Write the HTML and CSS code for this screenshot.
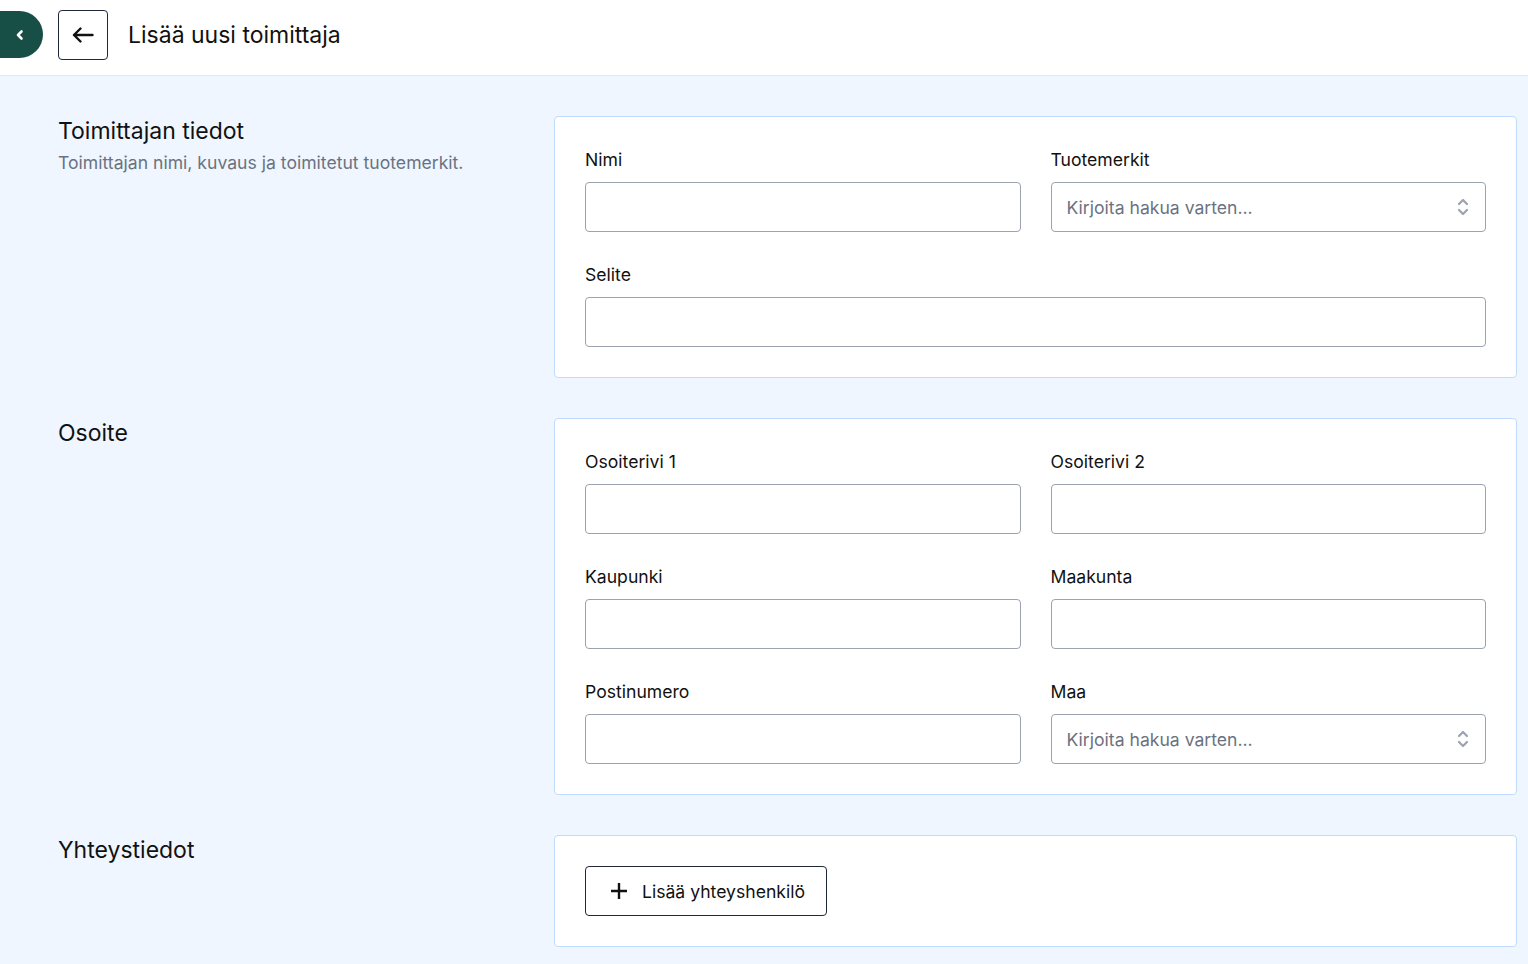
FILE: index.html
```html
<!DOCTYPE html>
<html lang="fi">
<head>
<meta charset="utf-8">
<title>Lisää uusi toimittaja</title>
<link rel="stylesheet" href="styles.css">
</head>
<body>
<header class="topbar">
  <button class="sidebar-toggle" aria-label="Sulje valikko">
    <svg width="10" height="12" viewBox="0 0 10 12"><path d="M6.5 2.5 3 6l3.5 3.5" fill="none" stroke="#fff" stroke-width="2.6" stroke-linecap="round" stroke-linejoin="round"/></svg>
  </button>
  <button class="back-btn" aria-label="Takaisin">
    <svg width="22" height="16" viewBox="0 0 22 16"><path d="M20.5 8H2M8.5 1.5 2 8l6.5 6.5" fill="none" stroke="#111" stroke-width="2.4" stroke-linecap="round" stroke-linejoin="round"/></svg>
  </button>
  <h1 class="page-title">Lisää uusi toimittaja</h1>
</header>
<main class="content">
  <section class="section">
    <div class="section-info">
      <h2 class="section-title">Toimittajan tiedot</h2>
      <p class="section-desc">Toimittajan nimi, kuvaus ja toimitetut tuotemerkit.</p>
    </div>
    <div class="card">
      <div class="grid">
        <div class="field">
          <label class="label">Nimi</label>
          <input class="input" type="text">
        </div>
        <div class="field">
          <label class="label">Tuotemerkit</label>
          <div class="select">
            <span class="placeholder">Kirjoita hakua varten...</span>
            <svg class="updown" width="14" height="22" viewBox="0 0 14 22"><path d="M3 8l4-4 4 4M3 14l4 4 4-4" fill="none" stroke="#9ca3af" stroke-width="2.2" stroke-linecap="round" stroke-linejoin="round"/></svg>
          </div>
        </div>
        <div class="field full">
          <label class="label">Selite</label>
          <input class="input" type="text">
        </div>
      </div>
    </div>
  </section>
  <section class="section">
    <div class="section-info">
      <h2 class="section-title">Osoite</h2>
    </div>
    <div class="card">
      <div class="grid">
        <div class="field">
          <label class="label">Osoiterivi 1</label>
          <input class="input" type="text">
        </div>
        <div class="field">
          <label class="label">Osoiterivi 2</label>
          <input class="input" type="text">
        </div>
        <div class="field">
          <label class="label">Kaupunki</label>
          <input class="input" type="text">
        </div>
        <div class="field">
          <label class="label">Maakunta</label>
          <input class="input" type="text">
        </div>
        <div class="field">
          <label class="label">Postinumero</label>
          <input class="input" type="text">
        </div>
        <div class="field">
          <label class="label">Maa</label>
          <div class="select">
            <span class="placeholder">Kirjoita hakua varten...</span>
            <svg class="updown" width="14" height="22" viewBox="0 0 14 22"><path d="M3 8l4-4 4 4M3 14l4 4 4-4" fill="none" stroke="#9ca3af" stroke-width="2.2" stroke-linecap="round" stroke-linejoin="round"/></svg>
          </div>
        </div>
      </div>
    </div>
  </section>
  <section class="section">
    <div class="section-info">
      <h2 class="section-title">Yhteystiedot</h2>
    </div>
    <div class="card">
      <button class="add-btn">
        <svg width="20" height="20" viewBox="0 0 20 20"><path d="M10 2v16M2 10h16" fill="none" stroke="#111" stroke-width="2.4"/></svg>
        <span>Lisää yhteyshenkilö</span>
      </button>
    </div>
  </section>
</main>
</body>
</html>
```
FILE: styles.css
```css
* { box-sizing: border-box; }
html, body { margin: 0; padding: 0; }
body {
  font-family: Inter, "Noto Sans", sans-serif;
  background: #eff6ff;
  color: #111827;
  min-height: 964px;
}
.topbar {
  height: 76px;
  background: #fff;
  border-bottom: 1px solid #dbeafe;
  display: flex;
  align-items: flex-start;
  padding-top: 10px;
}
.sidebar-toggle {
  width: 43px;
  height: 47px;
  margin-top: 1px;
  background: #174f47;
  border: none;
  border-radius: 0 24px 24px 0;
  display: flex;
  align-items: center;
  justify-content: center;
  padding: 0 4px 0 0;
}
.back-btn {
  margin-left: 15px;
  width: 50px;
  height: 50px;
  border: 1px solid #1f2937;
  border-radius: 4px;
  background: #fff;
  display: flex;
  align-items: center;
  justify-content: center;
  padding: 0;
}
.page-title {
  margin: 0 0 0 20px;
  font-size: 23px;
  font-weight: 400;
  line-height: 50px;
  color: #111;
}
.content {
  padding: 40px 11px 16px 58px;
  display: flex;
  flex-direction: column;
  gap: 40px;
}
.section {
  display: grid;
  grid-template-columns: 466px 1fr;
  gap: 30px;
  align-items: start;
}
.section-title {
  margin: 0;
  font-size: 23px;
  font-weight: 400;
  line-height: 30px;
  color: #111;
}
.section-desc {
  margin: 4px 0 0;
  font-size: 17.6px;
  line-height: 26px;
  color: #6b7280;
}
.card {
  background: #fff;
  border: 1px solid #bfdbfe;
  border-radius: 4px;
  padding: 30px;
}
.grid {
  display: grid;
  grid-template-columns: 1fr 1fr;
  column-gap: 30px;
  row-gap: 30px;
}
.field { display: flex; flex-direction: column; gap: 10px; }
.field.full { grid-column: 1 / -1; }
.label {
  font-size: 17.6px;
  line-height: 25px;
  color: #111;
}
.input, .select {
  height: 50px;
  width: 100%;
  border: 1px solid #9ca3af;
  border-radius: 4px;
  background: #fff;
  font: inherit;
  font-size: 17.6px;
}
.select {
  display: flex;
  align-items: center;
  justify-content: space-between;
  padding: 0 15px 0 15px;
}
.placeholder { color: #6b7280; font-size: 17.6px; }
.add-btn {
  height: 50px;
  width: 242px;
  border: 1px solid #1f2937;
  border-radius: 4px;
  background: #fff;
  display: flex;
  align-items: center;
  gap: 13px;
  padding: 0 0 0 23px;
  font-family: inherit;
  font-size: 17.6px;
  font-weight: 400;
  color: #111;
}
```
